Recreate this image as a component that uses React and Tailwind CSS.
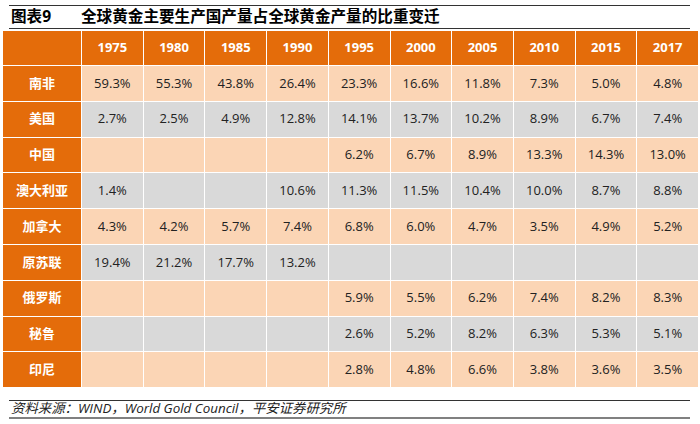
import React from "react";

const years = ["1975", "1980", "1985", "1990", "1995", "2000", "2005", "2010", "2015", "2017"];

const rows = [
  ["南非", "59.3%", "55.3%", "43.8%", "26.4%", "23.3%", "16.6%", "11.8%", "7.3%", "5.0%", "4.8%"],
  ["美国", "2.7%", "2.5%", "4.9%", "12.8%", "14.1%", "13.7%", "10.2%", "8.9%", "6.7%", "7.4%"],
  ["中国", "", "", "", "", "6.2%", "6.7%", "8.9%", "13.3%", "14.3%", "13.0%"],
  ["澳大利亚", "1.4%", "", "", "10.6%", "11.3%", "11.5%", "10.4%", "10.0%", "8.7%", "8.8%"],
  ["加拿大", "4.3%", "4.2%", "5.7%", "7.4%", "6.8%", "6.0%", "4.7%", "3.5%", "4.9%", "5.2%"],
  ["原苏联", "19.4%", "21.2%", "17.7%", "13.2%", "", "", "", "", "", ""],
  ["俄罗斯", "", "", "", "", "5.9%", "5.5%", "6.2%", "7.4%", "8.2%", "8.3%"],
  ["秘鲁", "", "", "", "", "2.6%", "5.2%", "8.2%", "6.3%", "5.3%", "5.1%"],
  ["印尼", "", "", "", "", "2.8%", "4.8%", "6.6%", "3.8%", "3.6%", "3.5%"],
];

const font = { fontFamily: '"Open Sans", "Noto Sans CJK SC", sans-serif' };

export default function App() {
  return (
    <div className="w-[700px] h-[424px] bg-white overflow-hidden" style={font}>
      {/* Title */}
      <div className="mx-[9px] mt-[5px] w-[681px] border-t border-[#333] border-b">
        <div className="flex items-center h-[22px] font-bold text-[15.6px] text-black leading-none">
          <span className="w-[72px] pl-[2px]">图表9</span>
          <span>全球黄金主要生产国产量占全球黄金产量的比重变迁</span>
        </div>
      </div>

      {/* Table */}
      <div className="ml-[3px] mt-[2px] w-[695px] grid grid-cols-[78px_repeat(10,1fr)] grid-rows-[34px_repeat(9,34.8px)] gap-px bg-white">
        <div className="bg-[#E46C0A]" />
        {years.map((y) => (
          <div key={y} className="bg-[#E46C0A] text-white font-bold text-[13px] flex items-center justify-center">
            {y}
          </div>
        ))}
        {rows.map((r, i) => (
          <React.Fragment key={r[0]}>
            <div className="bg-[#E46C0A] text-white font-bold text-[13px] flex items-center justify-center">
              {r[0]}
            </div>
            {r.slice(1).map((v, j) => (
              <div
                key={j}
                className={`${i % 2 === 0 ? "bg-[#FBD5B5]" : "bg-[#D9D9D9]"} text-[13px] text-[#222] flex items-center justify-center`}
              >
                {v}
              </div>
            ))}
          </React.Fragment>
        ))}
      </div>

      {/* Footer */}
      <div className="mx-[9px] mt-[13px] w-[681px] border-t border-[#333]">
        <div className="h-[16px] flex items-center pl-[2px] italic text-[13.4px] text-[#222] leading-none">
          资料来源：WIND，World Gold Council，平安证券研究所
        </div>
        <div className="h-[2px] bg-[#808080]" />
      </div>
    </div>
  );
}
